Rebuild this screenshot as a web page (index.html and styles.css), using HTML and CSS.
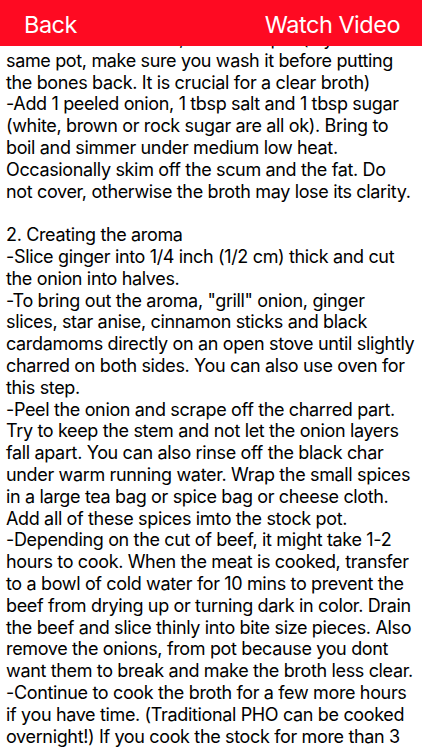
FILE: index.html
```html
<!DOCTYPE html>
<html>
<head>
<meta charset="utf-8">
<link rel="stylesheet" href="styles.css">
</head>
<body>
<header class="nav">
  <span class="nav-btn">Back</span>
  <span class="nav-btn">Watch Video</span>
</header>
<main class="content">
<p class="text">Then rinse the bones, scrub the pot (if you use the<br>
same pot, make sure you wash it before putting<br>
the bones back. It is crucial for a clear broth)<br>
-Add 1 peeled onion, 1 tbsp salt and 1 tbsp sugar<br>
(white, brown or rock sugar are all ok). Bring to<br>
boil and simmer under medium low heat.<br>
Occasionally skim off the scum and the fat. Do<br>
not cover, otherwise the broth may lose its clarity.<br>
<br>
2. Creating the aroma<br>
-Slice ginger into 1/4 inch (1/2 cm) thick and cut<br>
the onion into halves.<br>
-To bring out the aroma, "grill" onion, ginger<br>
slices, star anise, cinnamon sticks and black<br>
cardamoms directly on an open stove until slightly<br>
charred on both sides. You can also use oven for<br>
this step.<br>
-Peel the onion and scrape off the charred part.<br>
Try to keep the stem and not let the onion layers<br>
fall apart. You can also rinse off the black char<br>
under warm running water. Wrap the small spices<br>
in a large tea bag or spice bag or cheese cloth.<br>
Add all of these spices imto the stock pot.<br>
-Depending on the cut of beef, it might take 1-2<br>
hours to cook. When the meat is cooked, transfer<br>
to a bowl of cold water for 10 mins to prevent the<br>
beef from drying up or turning dark in color. Drain<br>
the beef and slice thinly into bite size pieces. Also<br>
remove the onions, from pot because you dont<br>
want them to break and make the broth less clear.<br>
-Continue to cook the broth for a few more hours<br>
if you have time. (Traditional PHO can be cooked<br>
overnight!) If you cook the stock for more than 3<br>
hours, remove the spice bag after 2 hours.</p>
</main>
</body>
</html>
```
FILE: styles.css
```css
html, body {
  margin: 0;
  padding: 0;
  background: #ffffff;
  overflow: hidden;
}
body {
  font-family: Inter, "Noto Sans", "Liberation Sans", sans-serif;
  color: #000;
}
.nav {
  position: fixed;
  top: 0;
  left: 0;
  right: 0;
  height: 46px;
  background: #fe0a22;
  display: flex;
  justify-content: space-between;
  align-items: center;
  padding: 0 22px 0 24px;
  box-sizing: border-box;
  z-index: 2;
}
.nav-btn {
  color: #fff;
  font-size: 23.5px;
  letter-spacing: -0.5px;
  line-height: 1;
  padding-top: 3px;
}
.content {
  padding: 28px 6px 0 6px;
}
.text {
  margin: 0;
  font-size: 18px;
  letter-spacing: -0.35px;
  line-height: 21.8px;
  white-space: nowrap;
}
```
